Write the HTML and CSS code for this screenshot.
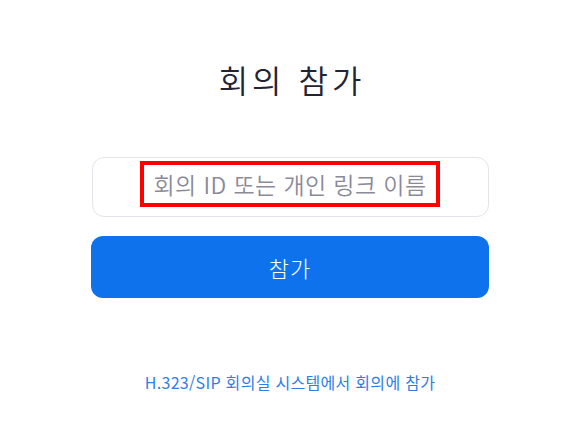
FILE: index.html
```html
<!DOCTYPE html>
<html lang="ko">
<head>
<meta charset="utf-8">
<link rel="stylesheet" href="styles.css">
</head>
<body>
<main class="page">
  <h1 class="title">회의 참가</h1>
  <div class="form">
    <div class="field">
      <span class="highlight">회의 ID 또는 개인 링크 이름</span>
    </div>
    <button class="join">참가</button>
  </div>
  <a class="sip" href="#">H.323/SIP 회의실 시스템에서 회의에 참가</a>
</main>
</body>
</html>
```
FILE: styles.css
```css
html, body {
  margin: 0;
  padding: 0;
  background: #ffffff;
}
body {
  width: 580px;
  height: 440px;
  font-family: "Noto Sans CJK KR", "Noto Sans", sans-serif;
}
.page {
  display: flex;
  flex-direction: column;
  align-items: center;
  padding-top: 54px;
}
.title {
  margin: 0;
  font-size: 32px;
  font-weight: 350;
  line-height: 50px;
  color: #232333;
  letter-spacing: 4px;
  padding-left: 4px;
}
.form {
  width: 398px;
  margin-top: 53px;
  display: flex;
  flex-direction: column;
  align-items: center;
}
.field {
  box-sizing: border-box;
  width: 397px;
  height: 60px;
  border: 1px solid #e4e4ea;
  border-radius: 12px;
  display: flex;
  justify-content: center;
  align-items: flex-start;
  padding-top: 3px;
}
.highlight {
  box-sizing: border-box;
  height: 46px;
  border: 4px solid #ff0000;
  padding: 0 10px;
  font-size: 23px;
  font-weight: 350;
  line-height: 38px;
  letter-spacing: 0.4px;
  color: #8a8a99;
  white-space: nowrap;
}
.join {
  margin-top: 19px;
  width: 398px;
  height: 62px;
  border: none;
  border-radius: 12px;
  background: #0e72ed;
  color: #ffffff;
  font-family: inherit;
  font-size: 22px;
  font-weight: 300;
  letter-spacing: 1px;
  padding: 0;
}
.sip {
  margin-top: 72px;
  font-size: 16px;
  line-height: 24px;
  letter-spacing: 0.3px;
  color: #2d7ee8;
  text-decoration: none;
  font-weight: 400;
}
```
